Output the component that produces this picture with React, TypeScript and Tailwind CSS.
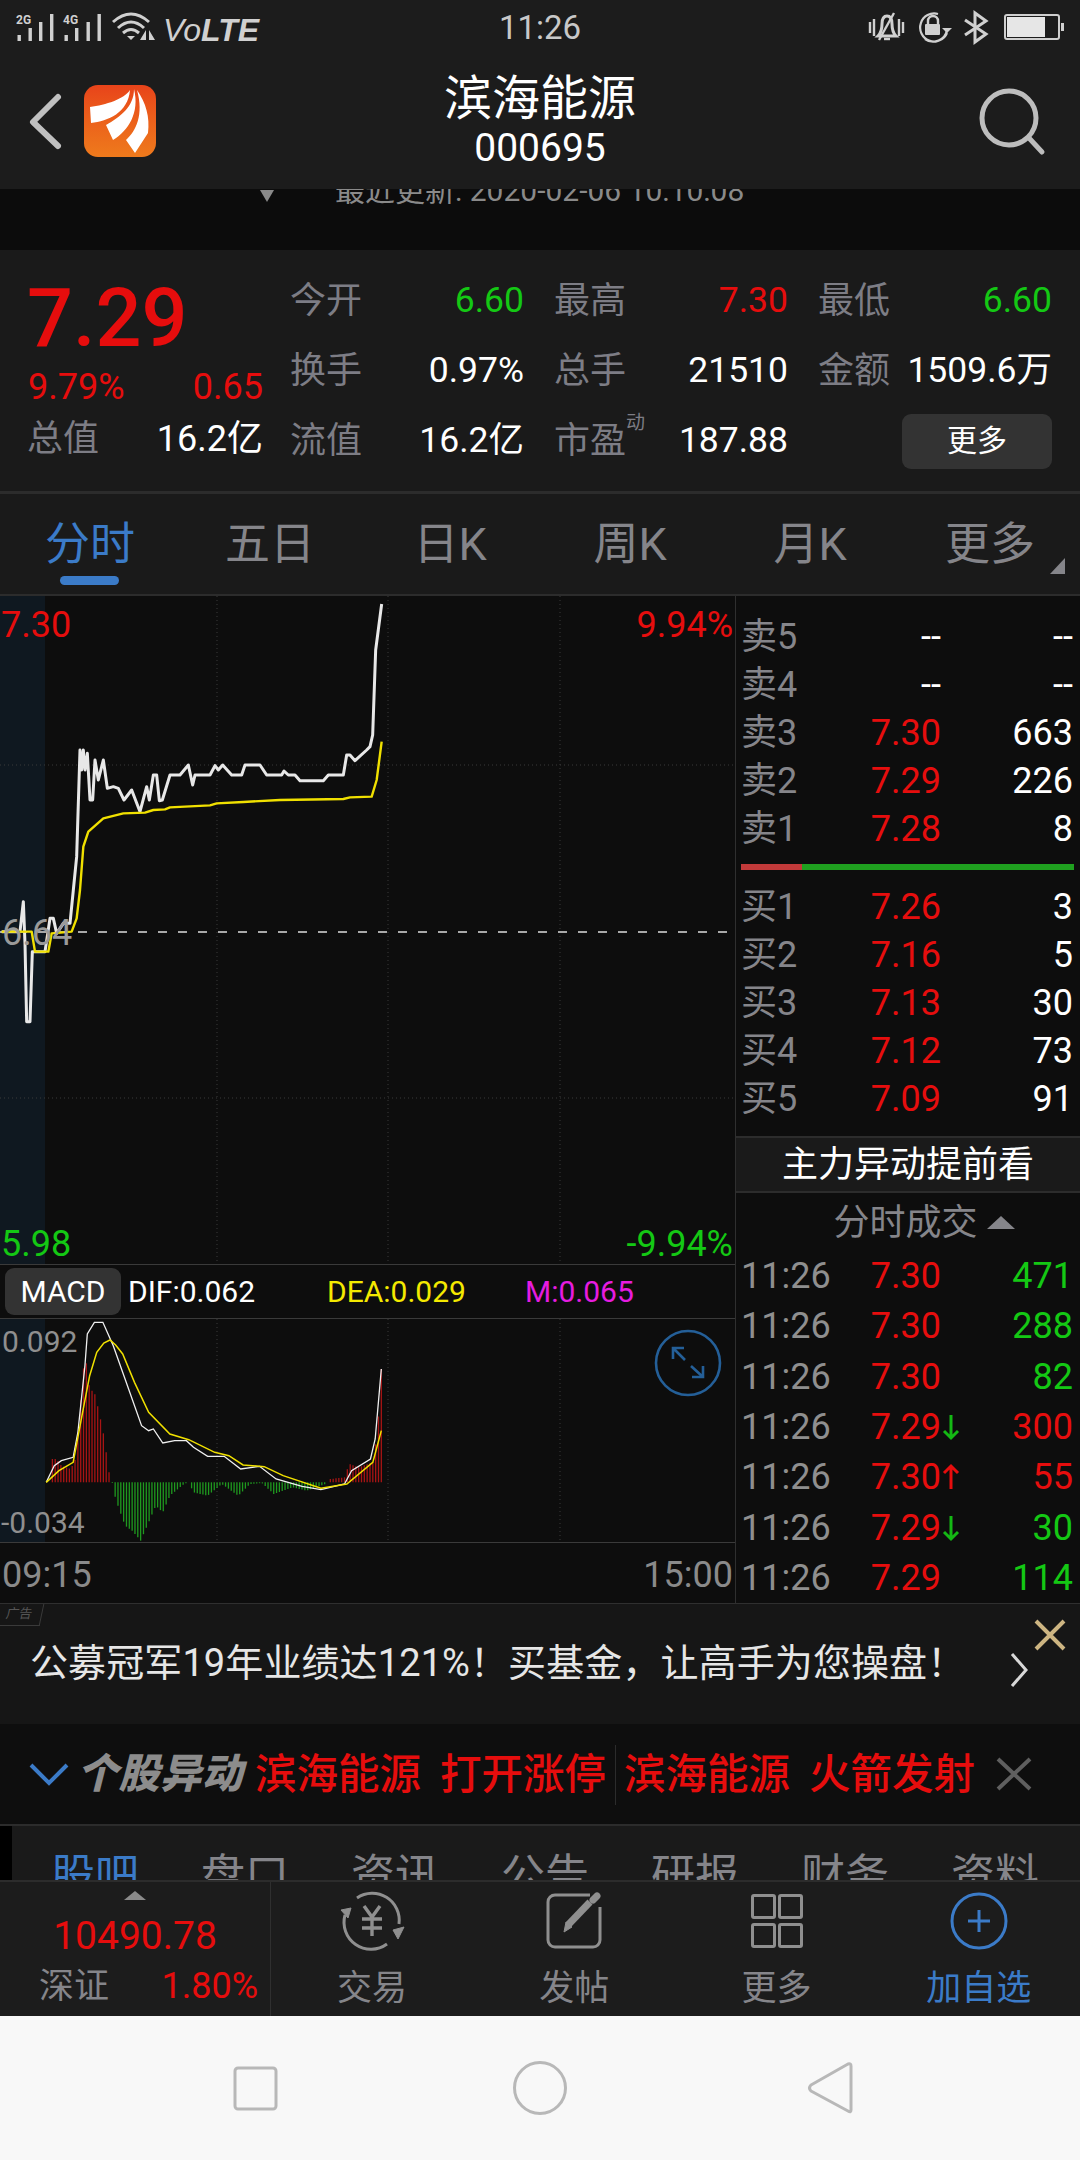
import { Fragment } from "react";

type P = [number, number];

const RED = "text-[#e60d0d]";
const GREEN = "text-[#14c814]";
const LABEL = "text-[#7d7d85]";

const priceLine: P[] = [[5,1025],[60,1025],[70,935],[75,1060],[80,1295],[90,1295],[97,1085],[135,1085],[150,985],[160,985],[170,1030],[190,1000],[210,1000],[220,900],[230,800],[240,480],[245,540],[250,480],[255,540],[262,490],[270,630],[278,630],[285,510],[295,570],[310,510],[322,595],[340,590],[355,595],[372,630],[395,600],[420,665],[440,590],[448,630],[460,555],[470,555],[478,632],[487,630],[510,555],[540,555],[565,525],[578,585],[585,555],[630,555],[645,527],[655,540],[668,525],[695,555],[725,555],[735,525],[780,525],[800,555],[845,555],[852,543],[865,555],[885,555],[900,572],[970,572],[985,555],[1030,555],[1040,495],[1050,495],[1065,512],[1100,480],[1110,470],[1118,435],[1127,180],[1145,42]];
const avgLine: P[] = [[5,1025],[95,1025],[105,1085],[145,1085],[155,1030],[215,1025],[230,985],[240,900],[250,770],[265,725],[310,685],[370,670],[435,668],[460,660],[495,658],[510,652],[630,646],[650,640],[730,636],[840,630],[1030,627],[1050,622],[1115,620],[1130,570],[1145,455]];
const difLine: P[] = [[98,730],[115,680],[130,665],[155,655],[165,580],[180,380],[185,285],[200,250],[218,250],[240,320],[265,420],[300,560],[315,575],[325,570],[345,612],[370,605],[395,605],[410,625],[440,652],[475,652],[510,690],[550,682],[585,720],[640,742],[680,752],[730,735],[745,695],[785,660],[795,600],[808,390]];
const deaLine: P[] = [[98,730],[125,695],[155,670],[175,520],[190,410],[205,340],[220,312],[233,303],[245,318],[260,345],[285,430],[315,520],[360,585],[400,602],[455,640],[485,650],[515,678],[560,683],[600,710],[680,748],[735,735],[790,670],[808,575]];
const redA: P[] = [[105,730],[110,660],[120,660],[130,680],[150,690],[160,660],[170,500],[180,340],[190,450],[200,460],[210,520],[220,590],[226,650],[232,710]];
const greenA: P[] = [[238,732],[245,780],[265,860],[280,875],[298,905],[315,850],[330,800],[345,820],[360,770],[390,735],[400,730],[410,760],[440,770],[470,735],[505,770],[530,735],[555,732],[580,765],[620,745],[650,755],[690,735]];
const redB: P[] = [[700,720],[730,715],[740,675],[760,685],[790,670],[800,580],[808,390]];

const mainPts = (l: P[]) => l.map(([x, y]) => `${x / 3},${y / 3 - 6}`).join(" ");
const macdPts = (l: P[]) => l.map(([x, y]) => `${x / 2.119},${y / 3 - 80}`).join(" ");

function lerp(l: P[], x: number) {
  for (let i = 1; i < l.length; i++) {
    if (x <= l[i][0]) {
      const t = (x - l[i - 1][0]) / (l[i][0] - l[i - 1][0]);
      return l[i - 1][1] + (l[i][1] - l[i - 1][1]) * t;
    }
  }
  return l[l.length - 1][1];
}

function bars(l: P[]) {
  const out: number[][] = [];
  for (let x = l[0][0]; x <= l[l.length - 1][0]; x += 6) out.push([x / 2.119, lerp(l, x) / 3 - 80]);
  return out;
}

function StatusLeft() {
  const barsAt = [17.5, 28.5, 39, 50, 64.5, 75, 86.5, 97.5];
  const tops = [35, 28, 22, 14, 35, 28, 22, 14];
  return (
    <svg width="270" height="56" viewBox="0 0 270 56">
      <text x="16" y="24" fontSize="12" fontWeight="700" fill="#d0d0d0" fontFamily="Roboto">2G</text>
      <text x="63" y="24" fontSize="12" fontWeight="700" fill="#d0d0d0" fontFamily="Roboto">4G</text>
      {barsAt.map((x, i) => (
        <rect key={x} x={x} y={tops[i]} width="3.4" height={41 - tops[i]} fill="#d0d0d0" />
      ))}
      <g fill="none" stroke="#d0d0d0" strokeWidth="3">
        <path d="M113 22 Q131 6 149 22" />
        <path d="M118 28 Q131 16 144 28" />
        <path d="M123 33 Q131 26 139 33" />
      </g>
      <path d="M127 36 L135 36 L131 40 Z" fill="#d0d0d0" />
      <path d="M146 30 V40 H140 Z M149 30 V40 H155 Z" fill="#d0d0d0" />
      <text x="163" y="41" fontSize="32" fontStyle="italic" fill="#d0d0d0" fontFamily="'Liberation Sans'">
        Vo<tspan fontWeight="700">LTE</tspan>
      </text>
    </svg>
  );
}

function StatusRight() {
  return (
    <svg width="230" height="56" viewBox="850 0 230 56" className="justify-self-end">
      <g fill="none" stroke="#d0d0d0" strokeWidth="2.4">
        <path d="M870 22V33M874 19V36M899 19V36M903 22V33" />
        <path d="M878 36 Q882 32 882 24 Q882 16 887 16 Q892 16 892 24 Q892 32 896 36 Z" strokeWidth="3" />
        <path d="M894 13 L879 40" />
        <path d="M884 39H890" />
        <path d="M947 33 A14 14 0 1 1 938 14 M947 30 A14 14 0 0 1 925 39" strokeWidth="2.2" />
        <path d="M928 24V21a5 5 0 0 1 10 0V24" />
      </g>
      <rect x="925" y="24" width="15" height="11" rx="1" fill="#d0d0d0" />
      <path d="M942 28H952L947 33Z" fill="#d0d0d0" />
      <path d="M965 20 L986 34 L975 42 V13 L986 21 L965 35" fill="none" stroke="#d0d0d0" strokeWidth="3" />
      <rect x="1005" y="15" width="54" height="24" rx="2" fill="none" stroke="#cfcfcf" strokeWidth="2" />
      <rect x="1007" y="17" width="38" height="20" fill="#e6e6e6" />
      <rect x="1061" y="23" width="3" height="8" fill="#cfcfcf" />
    </svg>
  );
}

function AppLogo() {
  return (
    <div className="w-[72px] h-[72px] rounded-[14px] bg-gradient-to-b from-[#e8431a] to-[#ee7a1c] overflow-hidden">
      <svg width="72" height="72" viewBox="0 0 72 72" fill="#fff">
        <path d="M46 5 C40 14 22 20 6 22 L7 38 C24 36 44 28 46 5Z" />
        <path d="M50 4 C50 22 36 32 22 40 L29 55 C44 46 56 28 50 4Z" />
        <path d="M53 5 C62 18 66 32 64 48 L51 68 L42 55 C52 46 60 30 53 5Z" />
      </svg>
    </div>
  );
}

function Stat({ label, value, color = "text-white" }: { label: string; value: string; color?: string }) {
  return (
    <div className="flex items-center justify-between h-[70px]">
      <span className={`${LABEL} text-[36px] leading-none`}>{label}</span>
      <span className={`${color} text-[35.5px] leading-none`}>{value}</span>
    </div>
  );
}

const sells = [
  ["卖5", "--", "--"],
  ["卖4", "--", "--"],
  ["卖3", "7.30", "663"],
  ["卖2", "7.29", "226"],
  ["卖1", "7.28", "8"],
];
const buys = [
  ["买1", "7.26", "3"],
  ["买2", "7.16", "5"],
  ["买3", "7.13", "30"],
  ["买4", "7.12", "73"],
  ["买5", "7.09", "91"],
];

const trades = [
  ["7.30", "", "471", GREEN],
  ["7.30", "", "288", GREEN],
  ["7.30", "", "82", GREEN],
  ["7.29", "down", "300", RED],
  ["7.30", "up", "55", RED],
  ["7.29", "down", "30", GREEN],
  ["7.29", "", "114", GREEN],
];

function BookRow({ row }: { row: string[] }) {
  const empty = row[1] === "--";
  return (
    <div className="grid grid-cols-[112px_88px_132px] items-center h-[48px] text-[36px] leading-none">
      <span className="text-[#85858a]">{row[0]}</span>
      <span className={`text-right ${empty ? "text-white" : RED}`}>{row[1]}</span>
      <span className="text-right text-white">{row[2]}</span>
    </div>
  );
}

function Arrow({ dir }: { dir: string }) {
  if (!dir) return <span />;
  const up = dir === "up";
  return (
    <svg width="20" height="28" viewBox="0 0 20 28" fill="none" stroke={up ? "#e60d0d" : "#14b814"} strokeWidth="3">
      {up ? <path d="M10 26V3M3 10L10 3L17 10" /> : <path d="M10 2V25M3 18L10 25L17 18" />}
    </svg>
  );
}

function MainChart() {
  return (
    <div className="relative h-[668px] bg-[#0d0d0d] overflow-hidden">
      <div className="absolute left-0 top-0 bottom-0 w-[45px] bg-[#0f1820]" />
      <span className={`absolute left-[1px] top-[11px] text-[36px] leading-[36px] ${RED}`}>7.30</span>
      <span className={`absolute right-[2px] top-[11px] text-[36px] leading-[36px] ${RED}`}>9.94%</span>
      <span className={`absolute left-[1px] bottom-[2px] text-[36px] leading-[36px] ${GREEN}`}>5.98</span>
      <span className={`absolute right-[2px] bottom-[2px] text-[36px] leading-[36px] ${GREEN}`}>-9.94%</span>
      <svg width="735" height="668" viewBox="0 0 735 668" className="absolute inset-0">
        <g stroke="#3a3a3a" strokeWidth="1" strokeDasharray="1 3">
          <path d="M217 0V668M388 0V668M560 0V668M0 169H735M0 502H735" />
        </g>
        <path d="M0 336H735" stroke="#a8a8a8" strokeWidth="2" strokeDasharray="9 11" strokeDashoffset="2" />
        <polyline points={mainPts(priceLine)} fill="none" stroke="#e8e8e8" strokeWidth="3" strokeLinejoin="round" />
        <polyline points={mainPts(avgLine)} fill="none" stroke="#f0e000" strokeWidth="2.4" strokeLinejoin="round" />
      </svg>
      <span className="absolute left-[2px] top-[319px] text-[36px] leading-[36px] text-[#9a9a9a]">6.64</span>
    </div>
  );
}

function MacdChart() {
  return (
    <div className="relative h-[223px] bg-[#0d0d0d] overflow-hidden">
      <div className="absolute left-0 top-0 bottom-0 w-[45px] bg-[#0f1820]" />
      <span className="absolute left-[2px] top-[8px] text-[30px] leading-[30px] text-[#8f8f8f]">0.092</span>
      <span className="absolute left-[1px] top-[189px] text-[30px] leading-[30px] text-[#8f8f8f]">-0.034</span>
      <svg width="735" height="223" viewBox="0 0 735 223" className="absolute inset-0">
        <path d="M217 0V223M388 0V223M560 0V223" stroke="#3a3a3a" strokeDasharray="1 3" />
        {[...bars(redA), ...bars(redB)].map(([x, y]) => (
          <path key={x} d={`M${x} 163.3V${y}`} stroke="#a81414" strokeWidth="1.3" />
        ))}
        {bars(greenA).map(([x, y]) => (
          <path key={x} d={`M${x} 163.3V${y}`} stroke="#1f991f" strokeWidth="1.3" />
        ))}
        <polyline points={macdPts(difLine)} fill="none" stroke="#f0f0f0" strokeWidth="1.3" />
        <polyline points={macdPts(deaLine)} fill="none" stroke="#f0e000" strokeWidth="1.5" />
        <g fill="none" stroke="#245f98" strokeWidth="2.6">
          <circle cx="688" cy="44" r="32" />
          <path d="M673 29L685 41M673 40V29H684M703 58L691 47M703 47V58H692" />
        </g>
      </svg>
    </div>
  );
}

export default function App() {
  return (
    <div className="w-[1080px] h-[2160px] overflow-hidden bg-[#0d0d0d] text-white font-[Roboto,'Noto_Sans_CJK_SC',sans-serif]">
      {/* header */}
      <header className="h-[189px] bg-[#1c1c1c]">
        <div className="grid grid-cols-[1fr_auto_1fr] items-center h-[56px]">
          <StatusLeft />
          <span className="text-[33px] leading-none text-[#c8c8c8] -mt-[1px]">11:26</span>
          <StatusRight />
        </div>
        <div className="grid grid-cols-[1fr_auto_1fr] items-start h-[133px]">
          <div className="flex items-start">
            <svg width="84" height="133" viewBox="0 0 84 133">
              <path d="M58 41L33 66L58 90" fill="none" stroke="#c0c0c0" strokeWidth="6" strokeLinecap="round" strokeLinejoin="round" />
            </svg>
            <div className="mt-[29px]"><AppLogo /></div>
          </div>
          <div className="flex flex-col items-center pt-[16px]">
            <span className="text-[48px] leading-[53px]">滨海能源</span>
            <span className="text-[39px] leading-[47px]">000695</span>
          </div>
          <svg width="80" height="90" viewBox="0 0 80 90" className="justify-self-end mr-[30px] mt-[30px]">
            <circle cx="39" cy="32" r="27" fill="none" stroke="#bdbdbd" strokeWidth="5" />
            <path d="M59 52L72 66" stroke="#bdbdbd" strokeWidth="5" strokeLinecap="round" />
          </svg>
        </div>
      </header>

      {/* clipped pull-to-refresh hint */}
      <div className="h-[61px] bg-[#0c0c0c] overflow-hidden relative">
        <div className="flex items-center -mt-[13px] h-[30px] pl-[260px] text-[#8a8a8a]">
          <span className="w-0 h-0 border-x-[7px] border-x-transparent border-t-[12px] border-t-[#8a8a8a] mt-[10px]" />
          <span className="ml-[61px] text-[30px] leading-none">最近更新: 2020-02-06 10:10:08</span>
        </div>
      </div>

      {/* quote stats */}
      <section className="h-[241px] bg-[#1a1a1a] flex pl-[28px] pr-[28px] pt-[16px]">
        <div className="w-[235px] mr-[27px]">
          <div className={`h-[93px] pt-[6px] text-[81px] leading-[94px] ${RED} font-medium -ml-[1px]`}>7.29</div>
          <div className={`flex justify-between h-[48px] items-end text-[36px] leading-[40px] ${RED}`}>
            <span>9.79%</span>
            <span>0.65</span>
          </div>
          <div className="flex justify-between items-center h-[70px] -mt-[3px] -ml-[1px]">
            <span className={`${LABEL} text-[36px] leading-none`}>总值</span>
            <span className="text-[36px] leading-none">16.2亿</span>
          </div>
        </div>
        <div className="grid grid-cols-3 gap-x-[30px] flex-1 content-start">
          <Stat label="今开" value="6.60" color={GREEN} />
          <Stat label="最高" value="7.30" color={RED} />
          <Stat label="最低" value="6.60" color={GREEN} />
          <Stat label="换手" value="0.97%" />
          <Stat label="总手" value="21510" />
          <Stat label="金额" value="1509.6万" />
          <Stat label="流值" value="16.2亿" />
          <div className="flex items-center justify-between h-[70px]">
            <span className={`${LABEL} text-[36px] leading-none relative`}>
              市盈
              <span className="absolute left-[72px] -top-[10px] text-[19px] leading-none">动</span>
            </span>
            <span className="text-[35.5px] leading-none">187.88</span>
          </div>
          <div className="flex items-center justify-end h-[70px]">
            <button className="w-[150px] h-[55px] rounded-[9px] bg-[#333333] text-[30px] leading-none text-white">更多</button>
          </div>
        </div>
      </section>

      {/* chart period tabs */}
      <nav className="grid grid-cols-6 h-[105px] bg-[#1a1a1a] border-t-[3px] border-b-[2px] border-[#2c2c2c] text-[45px] leading-none text-[#85858a]">
        {["分时", "五日", "日K", "周K", "月K", "更多"].map((t, i) => (
          <div key={t} className="relative flex items-center justify-center">
            <span className={i === 0 ? "text-[#3b7bc8]" : ""}>{t}</span>
            {i === 0 && <span className="absolute left-[60px] bottom-[9px] w-[59px] h-[9px] rounded-full bg-[#3b7bc8]" />}
            {i === 5 && <span className="absolute right-[15px] bottom-[20px] w-0 h-0 border-l-[15px] border-l-transparent border-b-[16px] border-b-[#85858a]" />}
          </div>
        ))}
      </nav>

      {/* charts and order book */}
      <section className="flex h-[1008px] border-b border-[#2f2f2f]">
        <div className="w-[735px] flex flex-col">
          <MainChart />
          <div className="h-[55px] flex items-center gap-[7px] bg-[#0d0d0d] border-y border-[#3a3a3a] pl-[5px] text-[30px] leading-none">
            <span className="w-[116px] h-[47px] rounded-[9px] bg-[#333333] flex items-center justify-center">MACD</span>
            <span className="w-[192px]">DIF:0.062</span>
            <span className="w-[191px] text-[#f4e900]">DEA:0.029</span>
            <span className="text-[#e61ce0]">M:0.065</span>
          </div>
          <MacdChart />
          <div className="flex-1 flex justify-between items-center border-t border-[#3a3a3a] px-[2px] pt-[3px] text-[36px] leading-none text-[#8a8a8a]">
            <span>09:15</span>
            <span>15:00</span>
          </div>
        </div>

        <div className="w-[345px] border-l border-[#2f2f2f] flex flex-col">
          <div className="h-[541px] pl-[5px] pt-[17px]">
            {sells.map((r) => <BookRow key={r[0]} row={r} />)}
            <div className="flex h-[6px] w-[333px] mt-[11px]">
              <span className="w-[61px] bg-[#c23a3a]" />
              <span className="flex-1 bg-[#1fa01f]" />
            </div>
            <div className="mt-[13px]">
              {buys.map((r) => <BookRow key={r[0]} row={r} />)}
            </div>
          </div>
          <div className="h-[57px] bg-[#1a1a1a] border-y-2 border-[#2c2c2c] flex items-center justify-center text-[36px] leading-none">
            主力异动提前看
          </div>
          <div className="h-[58px] flex items-center justify-center gap-[9px] text-[36px] leading-none text-[#85858a] pl-[32px] pt-[2px]">
            <span>分时成交</span>
            <span className="w-0 h-0 border-x-[14px] border-x-transparent border-b-[13px] border-b-[#85858a]" />
          </div>
          <div className="pl-[5px]">
            {trades.map((t, i) => (
              <Fragment key={i}>
                <div className="grid grid-cols-[112px_88px_24px_108px] items-center h-[50.3px] text-[36px] leading-none">
                  <span className="text-[#8f8f8f]">11:26</span>
                  <span className={`text-right ${RED}`}>{t[0]}</span>
                  <Arrow dir={t[1]} />
                  <span className={`text-right ${t[3]}`}>{t[2]}</span>
                </div>
              </Fragment>
            ))}
          </div>
        </div>
      </section>

      {/* ad */}
      <div className="relative h-[120px] bg-[#161616] flex items-center pl-[30px] pb-[2px]">
        <span className="absolute left-0 top-0 w-[42px] h-[22px] border-r border-b border-[#3a3a3a] -skew-x-12 text-[13px] leading-[20px] text-[#555] pl-[6px]">广告</span>
        <span className="text-[38px] leading-none tracking-[0.1px] text-[#e6e6e6]">公募冠军19年业绩达121%！买基金，让高手为您操盘！</span>
        <svg width="20" height="36" viewBox="0 0 20 36" className="absolute left-[1009px] top-[48px]">
          <path d="M3 2L17 18L3 34" fill="none" stroke="#d8d8d8" strokeWidth="3" />
        </svg>
        <svg width="32" height="32" viewBox="0 0 32 32" className="absolute left-[1034px] top-[15px]">
          <path d="M2 2L30 30M30 2L2 30" stroke="#cdb582" strokeWidth="4" />
        </svg>
      </div>

      {/* stock alerts */}
      <div className="h-[102px] bg-[#0e0e0e] border-b-2 border-[#2c2c2c] flex items-center">
        <svg width="40" height="24" viewBox="0 0 40 24" className="ml-[29px]">
          <path d="M2 3L20 21L38 3" fill="none" stroke="#3b7bc8" strokeWidth="4" />
        </svg>
        <span className="ml-[8px] w-[178px] text-[41px] leading-none font-black italic text-[#8c8c8c] tracking-[0.5px]">个股异动</span>
        <div className="flex items-center text-[41.5px] leading-none text-[#e60d0d] font-medium pt-[1px]">
          <span className="w-[360px] flex gap-[19px]"><span>滨海能源</span><span>打开涨停</span></span>
          <span className="w-px h-[60px] bg-[#2c2c2c] mr-[8px]" />
          <span className="flex gap-[19px]"><span>滨海能源</span><span>火箭发射</span></span>
        </div>
        <svg width="36" height="34" viewBox="0 0 36 34" className="ml-[21px]">
          <path d="M2 2L34 32M34 2L2 32" stroke="#5f5f5f" strokeWidth="4" />
        </svg>
      </div>

      {/* detail tabs, cut off by the bottom bar */}
      <div className="h-[54px] overflow-hidden bg-[#1a1a1a] flex border-l-[12px] border-black">
        <div className="grid grid-cols-7 w-[1050px] ml-[8px] pt-[28px] text-[44px] leading-none text-[#85858a]">
          {["股吧", "盘口", "资讯", "公告", "研报", "财务", "资料"].map((t, i) => (
            <span key={t} className={`text-center ${i === 0 ? "text-[#3b7bc8]" : ""}`}>{t}</span>
          ))}
        </div>
      </div>

      {/* bottom actions */}
      <div className="h-[136px] bg-[#1c1c1c] border-t-2 border-[#2c2c2c] flex">
        <div className="w-[271px] border-r border-[#2f2f2f] flex flex-col items-center relative">
          <span className="w-0 h-0 border-x-[11px] border-x-transparent border-b-[9px] border-b-[#8a8a8a] mt-[9px]" />
          <span className={`text-[39px] leading-none mt-[17px] ${RED}`}>10490.78</span>
          <div className="flex justify-between w-full pl-[39px] pr-[12px] mt-[12px] items-center">
            <span className="text-[35px] leading-none text-[#85858a]">深证</span>
            <span className={`text-[36px] leading-none ${RED}`}>1.80%</span>
          </div>
        </div>
        <div className="flex-1 grid grid-cols-4 text-[35px] leading-none text-[#85858a]">
          <div className="flex flex-col items-center">
            <svg width="60" height="60" viewBox="0 0 60 60" className="mt-[9px] overflow-visible" fill="none" stroke="#8f8f8f" strokeWidth="3">
              <path d="M15 7A27 27 0 0 1 57 33M45 53A27 27 0 0 1 3 24" />
              <path d="M51 39L62 36L56 48ZM-1 19L9 17L6 27Z" fill="#8f8f8f" strokeWidth="1" />
              <path d="M22 15L30 26L38 15M20 28H40M20 37H40M30 26V45" strokeWidth="3.4" />
            </svg>
            <span className="mt-[20px]">交易</span>
          </div>
          <div className="flex flex-col items-center">
            <svg width="60" height="60" viewBox="0 0 60 60" className="mt-[9px]" fill="none" stroke="#8f8f8f" strokeWidth="3">
              <path d="M46 4H11a7 7 0 0 0-7 7V49a7 7 0 0 0 7 7H49a7 7 0 0 0 7-7V16" />
              <path d="M24 34L46 11" strokeWidth="7" />
              <path d="M49 9L53 5" strokeWidth="7" strokeLinecap="round" />
              <path d="M20 41L22 31L28 36Z" fill="#8f8f8f" strokeWidth="1" />
            </svg>
            <span className="mt-[20px]">发帖</span>
          </div>
          <div className="flex flex-col items-center">
            <svg width="60" height="60" viewBox="0 0 60 60" className="mt-[9px]" fill="none" stroke="#8f8f8f" strokeWidth="3">
              <rect x="5.5" y="4.5" width="22" height="22" rx="1.5" />
              <rect x="32.5" y="4.5" width="22" height="22" rx="1.5" />
              <rect x="5.5" y="33.5" width="22" height="22" rx="1.5" />
              <rect x="32.5" y="33.5" width="22" height="22" rx="1.5" />
            </svg>
            <span className="mt-[20px]">更多</span>
          </div>
          <div className="flex flex-col items-center text-[#3b7bc8]">
            <svg width="60" height="60" viewBox="0 0 60 60" className="mt-[9px]" fill="none" stroke="#3b7bc8" strokeWidth="3">
              <circle cx="30" cy="30" r="27" />
              <path d="M30 19V41M19 30H41" />
            </svg>
            <span className="mt-[20px]">加自选</span>
          </div>
        </div>
      </div>

      {/* android nav */}
      <div className="h-[144px] bg-[#f8f8f8] flex items-center justify-center">
        <svg width="660" height="60" viewBox="210 2058 660 60" fill="none" stroke="#b8b8b8" strokeWidth="3">
          <rect x="235" y="2068" width="41" height="41" rx="3" />
          <circle cx="540" cy="2088" r="25.5" />
          <path d="M851 2066V2110Q851 2113 848 2111L811 2091Q808 2088 811 2085L848 2064Q851 2063 851 2066Z" strokeLinejoin="round" />
        </svg>
      </div>
    </div>
  );
}
